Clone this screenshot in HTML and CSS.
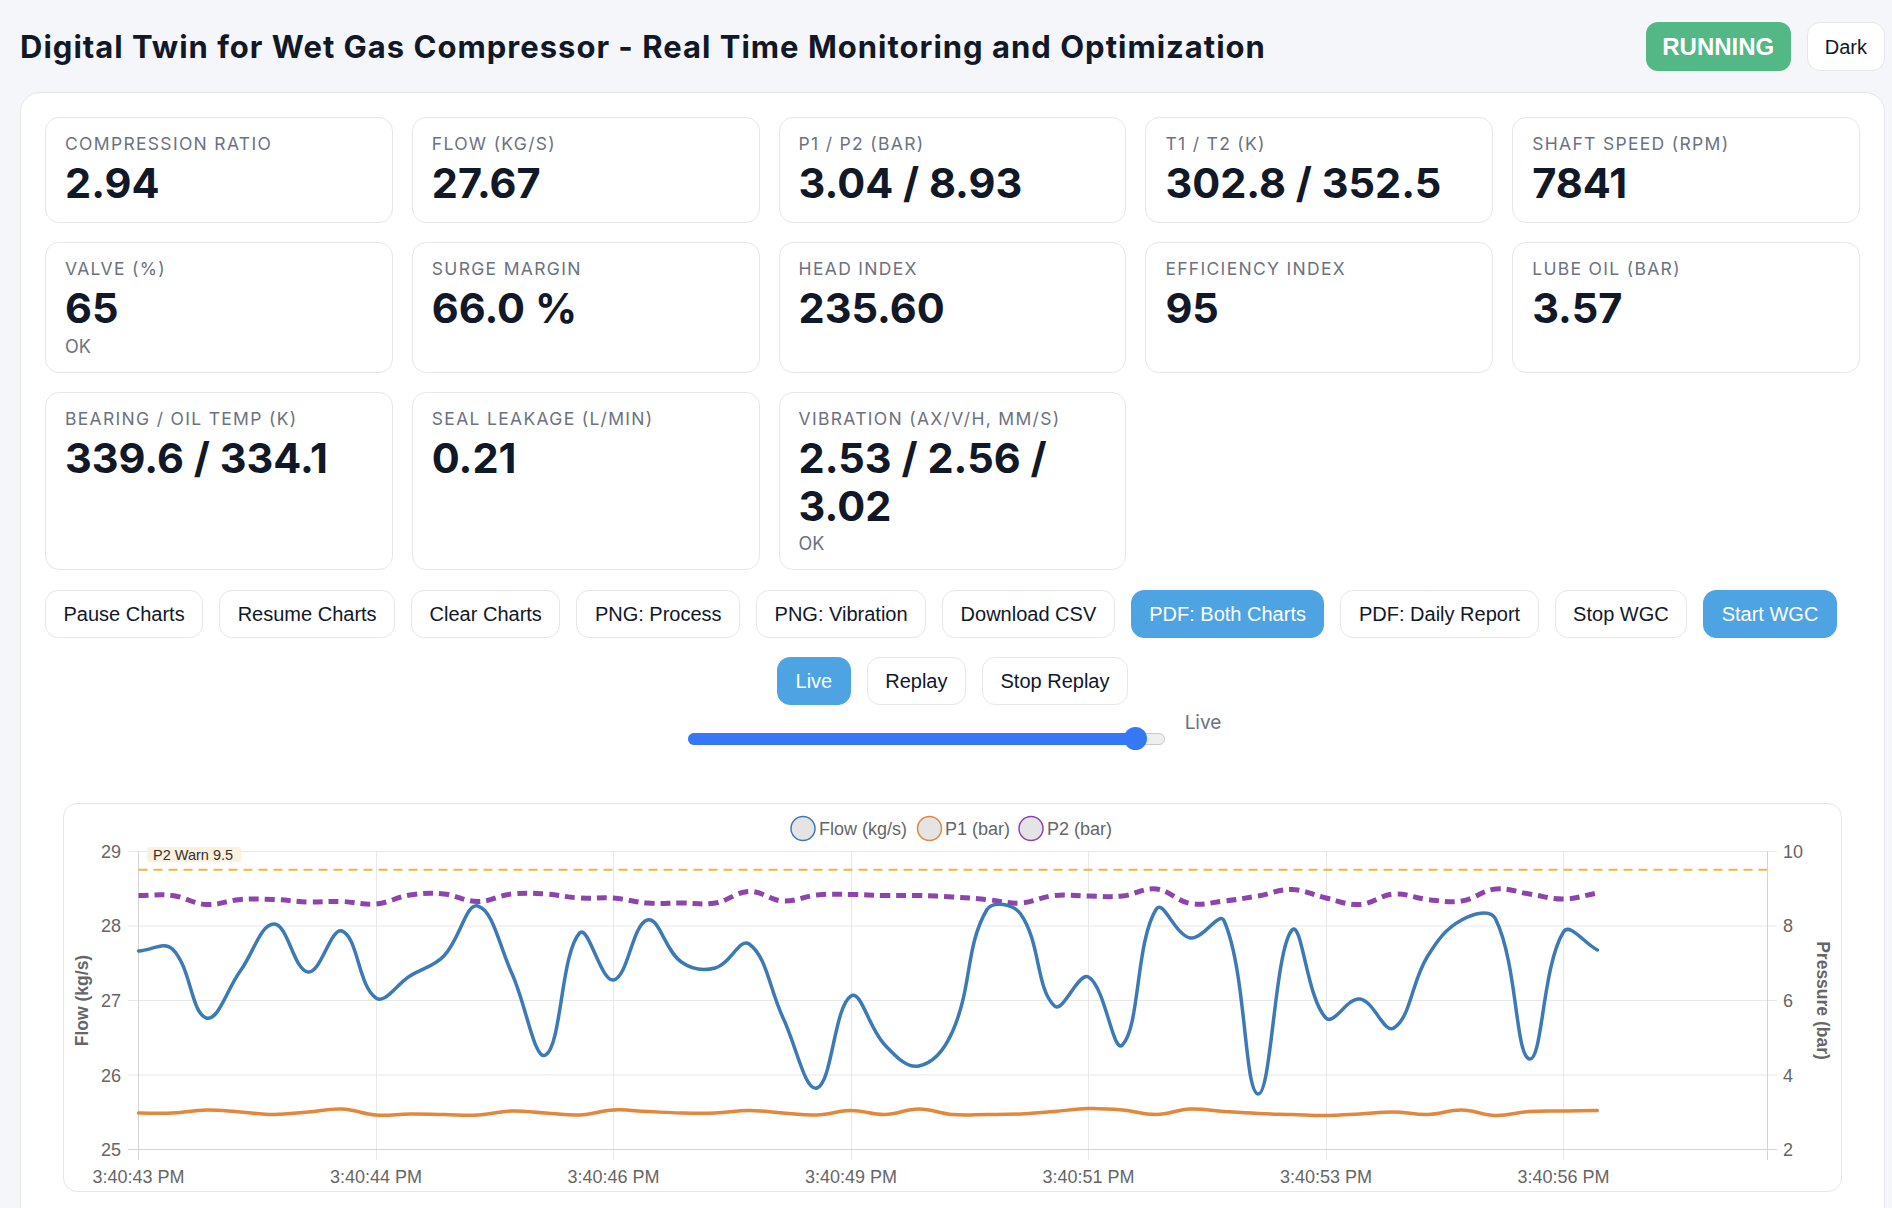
FILE: index.html
```html
<!DOCTYPE html>
<html lang="en">
<head>
<meta charset="utf-8">
<title>Digital Twin for Wet Gas Compressor</title>
<link rel="stylesheet" href="styles.css">
</head>
<body>
<div class="page">
  <header class="topbar">
    <h1 class="title">Digital Twin for Wet Gas Compressor - Real Time Monitoring and Optimization</h1>
    <div class="top-actions">
      <span class="status">RUNNING</span>
      <button class="btn btn-theme">Dark</button>
    </div>
  </header>

  <main class="panel">
    <section class="metrics">
      <div class="metric"><div class="m-label">Compression Ratio</div><div class="m-value">2.94</div></div>
      <div class="metric"><div class="m-label">Flow (kg/s)</div><div class="m-value">27.67</div></div>
      <div class="metric"><div class="m-label">P1 / P2 (bar)</div><div class="m-value">3.04 / 8.93</div></div>
      <div class="metric"><div class="m-label">T1 / T2 (K)</div><div class="m-value">302.8 / 352.5</div></div>
      <div class="metric"><div class="m-label">Shaft Speed (rpm)</div><div class="m-value">7841</div></div>

      <div class="metric"><div class="m-label">Valve (%)</div><div class="m-value">65</div><div class="m-sub">OK</div></div>
      <div class="metric"><div class="m-label">Surge Margin</div><div class="m-value">66.0 %</div></div>
      <div class="metric"><div class="m-label">Head Index</div><div class="m-value">235.60</div></div>
      <div class="metric"><div class="m-label">Efficiency Index</div><div class="m-value">95</div></div>
      <div class="metric"><div class="m-label">Lube Oil (bar)</div><div class="m-value">3.57</div></div>

      <div class="metric"><div class="m-label">Bearing / Oil Temp (K)</div><div class="m-value">339.6 / 334.1</div></div>
      <div class="metric"><div class="m-label">Seal Leakage (L/min)</div><div class="m-value">0.21</div></div>
      <div class="metric"><div class="m-label">Vibration (ax/v/h, mm/s)</div><div class="m-value">2.53 / 2.56 / 3.02</div><div class="m-sub">OK</div></div>
    </section>

    <div class="actions">
      <button class="btn">Pause Charts</button>
      <button class="btn">Resume Charts</button>
      <button class="btn">Clear Charts</button>
      <button class="btn">PNG: Process</button>
      <button class="btn">PNG: Vibration</button>
      <button class="btn">Download CSV</button>
      <button class="btn btn-primary">PDF: Both Charts</button>
      <button class="btn">PDF: Daily Report</button>
      <button class="btn">Stop WGC</button>
      <button class="btn btn-primary">Start WGC</button>
    </div>

    <div class="replay">
      <button class="btn btn-primary">Live</button>
      <button class="btn">Replay</button>
      <button class="btn">Stop Replay</button>
    </div>

    <div class="scrub">
      <div class="range">
        <div class="range-track"></div>
        <div class="range-fill"></div>
        <div class="range-thumb"></div>
      </div>
      <span class="scrub-label">Live</span>
    </div>

    <div class="chart-card">
      <svg class="chart" width="1777" height="387" viewBox="64 806 1777 387" xmlns="http://www.w3.org/2000/svg">
        <!-- legend -->
        <g class="legend">
          <circle cx="803" cy="830.5" r="12" fill="#e4e4e4" stroke="#3c7ab7" stroke-width="1.5"/>
          <text x="819" y="837">Flow (kg/s)</text>
          <circle cx="929.5" cy="830.5" r="12" fill="#e4e4e4" stroke="#e2873c" stroke-width="1.5"/>
          <text x="945" y="837">P1 (bar)</text>
          <circle cx="1031" cy="830.5" r="12" fill="#e4e4e4" stroke="#8e44ad" stroke-width="1.5"/>
          <text x="1047" y="837">P2 (bar)</text>
        </g>

        <!-- grid -->
        <g class="grid" stroke="#e8e8e8" stroke-width="1" fill="none">
          <path d="M128 853.5H1777M128 928H1777M128 1002.5H1777M128 1077H1777"/>
          <path d="M376.5 853V1162M613.5 853V1162M851.5 853V1162M1088.5 853V1162M1326.5 853V1162M1563.5 853V1162"/>
        </g>
        <g class="axes" stroke="#d4d4d4" stroke-width="1" fill="none">
          <path d="M138.5 853V1162"/>
          <path d="M1767.5 853V1162"/>
          <path d="M128 1151.5H1777"/>
        </g>

        <!-- tick labels -->
        <g class="ticks">
          <text x="121" y="859.5" text-anchor="end">29</text>
          <text x="121" y="934" text-anchor="end">28</text>
          <text x="121" y="1009" text-anchor="end">27</text>
          <text x="121" y="1083.5" text-anchor="end">26</text>
          <text x="121" y="1158" text-anchor="end">25</text>

          <text x="1783" y="859.5">10</text>
          <text x="1783" y="934">8</text>
          <text x="1783" y="1009">6</text>
          <text x="1783" y="1083.5">4</text>
          <text x="1783" y="1158">2</text>

          <text x="138.5" y="1184.5" text-anchor="middle">3:40:43 PM</text>
          <text x="376" y="1184.5" text-anchor="middle">3:40:44 PM</text>
          <text x="613.5" y="1184.5" text-anchor="middle">3:40:46 PM</text>
          <text x="851" y="1184.5" text-anchor="middle">3:40:49 PM</text>
          <text x="1088.5" y="1184.5" text-anchor="middle">3:40:51 PM</text>
          <text x="1326" y="1184.5" text-anchor="middle">3:40:53 PM</text>
          <text x="1563.5" y="1184.5" text-anchor="middle">3:40:56 PM</text>
        </g>

        <text class="axis-title" transform="translate(88 1002.5) rotate(-90)" text-anchor="middle">Flow (kg/s)</text>
        <text class="axis-title" transform="translate(1817 1002.5) rotate(90)" text-anchor="middle">Pressure (bar)</text>

        <!-- warning annotation -->
        <line x1="138.5" y1="871.7" x2="1767" y2="871.7" stroke="#f5b342" stroke-width="2" stroke-dasharray="9 6"/>
        <rect x="147" y="849" width="94" height="15" rx="3" fill="#fdf0dc"/>
        <text class="warn-label" x="153" y="862">P2 Warn 9.5</text>

        <!-- series -->
        <path id="line-p2" d="" fill="none" stroke="#8e44ad" stroke-width="5" stroke-dasharray="10 6"/>
        <path id="line-p1" d="" fill="none" stroke="#e2873c" stroke-width="3.5" stroke-linejoin="round" stroke-linecap="round"/>
        <path id="line-flow" d="" fill="none" stroke="#3c7ab7" stroke-width="3.5" stroke-linejoin="round" stroke-linecap="round"/>
      </svg>
    </div>
  </main>
</div>
<script src="script.js"></script>
</body>
</html>
```

FILE: styles.css
```css
* { box-sizing: border-box; }

html { overflow: hidden; }

body {
  margin: 0;
  background: #f5f6fa;
  font-family: Inter, "Noto Sans", sans-serif;
  color: #111827;
}

.page {
  width: 1885px;
  padding: 22px 0 0 20px;
}

.topbar {
  display: flex;
  align-items: center;
  justify-content: space-between;
  height: 49px;
}

.title {
  margin: 0;
  font-size: 31px;
  font-weight: 700;
  letter-spacing: 1px;
  color: #111827;
}

.top-actions {
  display: flex;
  align-items: center;
  gap: 16px;
}

.status {
  display: flex;
  align-items: center;
  height: 49px;
  padding: 0 16.5px;
  border-radius: 12px;
  background: #54b886;
  color: #fff;
  font: 700 24px "Liberation Sans", Arial, sans-serif;
}

.btn {
  font: 20px/22px "Liberation Sans", Arial, sans-serif;
  color: #111827;
  background: #fff;
  border: 1px solid #e5e7eb;
  border-radius: 13px;
  padding: 12px 17.5px;
  margin: 0;
  white-space: nowrap;
}

.btn-theme {
  height: 49px;
  padding: 0 17px;
}

.btn-primary {
  background: #4ea4e2;
  border-color: #4ea4e2;
  color: #fff;
}

.panel {
  margin-top: 21px;
  background: #fff;
  border: 1px solid #e5e7eb;
  border-radius: 20px;
  padding: 24px 24px 40px;
}

.metrics {
  display: grid;
  grid-template-columns: repeat(5, 1fr);
  gap: 19px 19px;
}

.metric {
  border: 1px solid #e5e7eb;
  border-radius: 14px;
  padding: 15px 19px 15px;
  background: #fff;
}

.m-label {
  font-size: 17.5px;
  line-height: 21px;
  letter-spacing: 0.075em;
  text-transform: uppercase;
  color: #6b7280;
}

.m-value {
  margin-top: 5px;
  font-size: 41.5px;
  line-height: 48px;
  font-weight: 700;
  color: #111827;
}

.m-sub {
  margin-top: 4.5px;
  font-size: 18px;
  line-height: 20px;
  color: #6b7280;
}

.actions {
  display: flex;
  flex-wrap: wrap;
  gap: 16px;
  margin-top: 19.5px;
}

.replay {
  display: flex;
  justify-content: center;
  gap: 16px;
  margin-top: 19px;
}

.scrub {
  display: flex;
  justify-content: center;
  align-items: flex-start;
  gap: 20px;
  margin-top: 6.5px;
}

.range {
  position: relative;
  width: 477px;
  height: 23px;
  margin-top: 16px;
  margin-left: 4px;
}

.range-track {
  position: absolute;
  left: 0;
  right: 0;
  top: 5.5px;
  height: 12px;
  border-radius: 6px;
  background: #efefef;
  border: 1px solid #c9c9c9;
}

.range-fill {
  position: absolute;
  left: 0;
  top: 5.5px;
  width: 452px;
  height: 12px;
  border-radius: 6px;
  background: #3478f6;
}

.range-thumb {
  position: absolute;
  left: 436.5px;
  top: 0;
  width: 23px;
  height: 23px;
  border-radius: 50%;
  background: #3478f6;
}

.scrub-label {
  font-size: 19px;
  line-height: 23px;
  color: #6b7280;
}

.chart-card {
  margin: 53px 18px 0;
  height: 389px;
  border: 1px solid #e5e7eb;
  border-radius: 14px;
  background: #fff;
  overflow: hidden;
}

.chart {
  display: block;
}

.chart text {
  font-family: "Liberation Sans", Arial, sans-serif;
  font-size: 18px;
  fill: #666;
}

.chart .axis-title {
  font-size: 17.5px;
  font-weight: 700;
}

.chart .warn-label {
  font-size: 14.5px;
  fill: #333;
}
```

FILE: script.js
```js
(function () {
  var x0 = 138.5;
  var step = (1767 - 138.5) / 48;

  var flow = [953,951,1020,973,926,974,933,1000,978,958,908,975,1057,935,982,922,964,970,946,1020,1090,998,1047,1068,1033,912,916,1008,979,1047,911,940,923,1096,932,1020,1001,1030,958,922,921,1061,934,952];
  var p1 = [1115,1115,1112,1114,1116.5,1114,1111,1117,1116,1116.5,1117,1113,1115,1117,1112,1113.5,1115,1115,1112.5,1115,1117,1112.5,1116.5,1111,1116.5,1116.5,1116,1113.5,1110.5,1112,1116.5,1111,1113.5,1115.5,1116.5,1117.5,1116,1114,1116.5,1112,1117.5,1113.5,1113,1112.5];
  var p2 = [897.5,897.5,906.5,901.5,901.5,904,903.5,906,897,896,903.5,896,896,900,900,905,905,905,893.5,903,897,896.5,897.5,897.5,899,901.5,905,897.5,898,898,891,905.5,903,898,891.5,900,906.5,896,901.5,903,891,896,901,895];

  function f(n) { return n.toFixed(2); }

  function spline(ys, t) {
    var pts = ys.map(function (y, i) { return [x0 + step * i, y]; });
    var cps = pts.map(function (p, i) {
      var prev = pts[i - 1] || p;
      var next = pts[i + 1] || p;
      var d01 = Math.hypot(p[0] - prev[0], p[1] - prev[1]);
      var d12 = Math.hypot(next[0] - p[0], next[1] - p[1]);
      var s01 = d01 / (d01 + d12);
      var s12 = d12 / (d01 + d12);
      if (isNaN(s01)) s01 = 0;
      if (isNaN(s12)) s12 = 0;
      var fa = t * s01, fb = t * s12;
      return {
        prev: [p[0] - fa * (next[0] - prev[0]), p[1] - fa * (next[1] - prev[1])],
        next: [p[0] + fb * (next[0] - prev[0]), p[1] + fb * (next[1] - prev[1])]
      };
    });
    var d = 'M' + f(pts[0][0]) + ' ' + f(pts[0][1]);
    for (var i = 1; i < pts.length; i++) {
      var c1 = cps[i - 1].next, c2 = cps[i].prev, p = pts[i];
      d += ' C' + f(c1[0]) + ' ' + f(c1[1]) + ' ' + f(c2[0]) + ' ' + f(c2[1]) + ' ' + f(p[0]) + ' ' + f(p[1]);
    }
    return d;
  }

  document.getElementById('line-flow').setAttribute('d', spline(flow, 0.4));
  document.getElementById('line-p1').setAttribute('d', spline(p1, 0.4));
  document.getElementById('line-p2').setAttribute('d', spline(p2, 0.4));
})();
```
